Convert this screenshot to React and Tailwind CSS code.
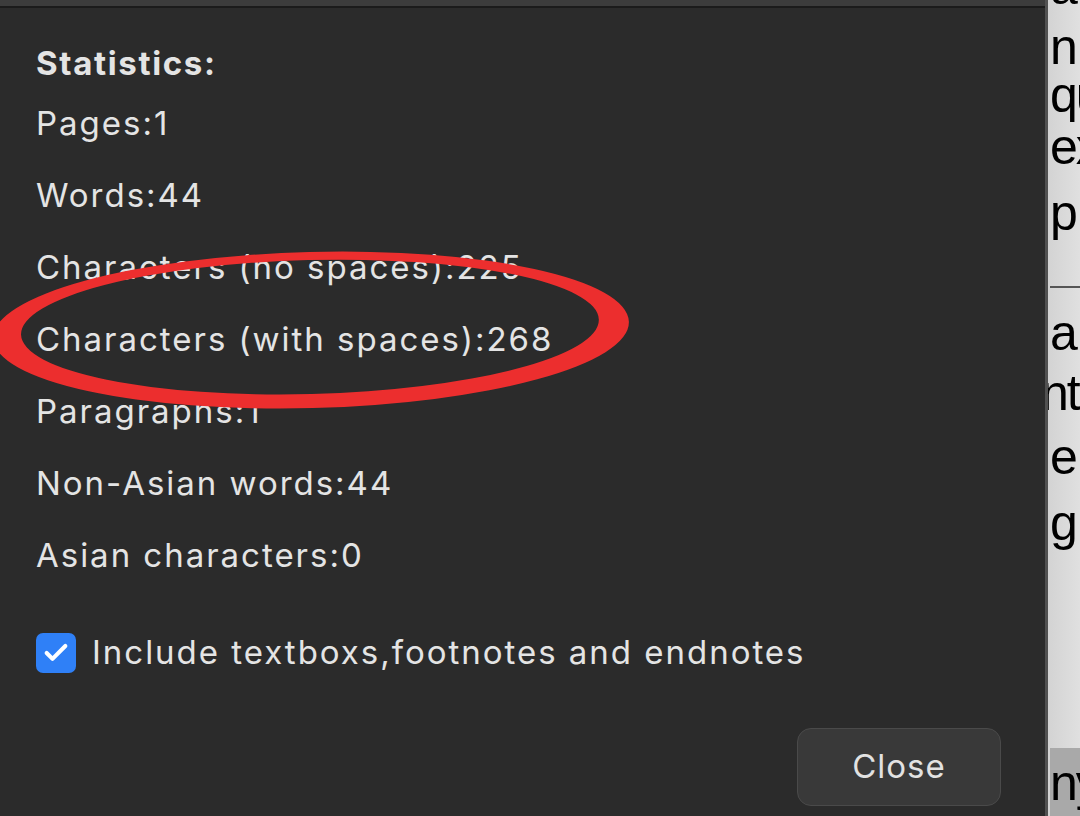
import { Check } from "lucide-react";

const stats = [
  "Pages:1",
  "Words:44",
  "Characters (no spaces):225",
  "Characters (with spaces):268",
  "Paragraphs:1",
  "Non-Asian words:44",
  "Asian characters:0",
];

// bits of the document peeking out to the right of the dialog
const docTop = [
  { text: "a", cls: "h-[60px]" },
  { text: "n", cls: "h-[48px]" },
  { text: "qu", cls: "h-[52px]" },
  { text: "ex", cls: "h-[66px]" },
  { text: "p", cls: "h-[60px]" },
];

const docMid = [
  { text: "a", cls: "h-[60px]" },
  { text: "nts", cls: "h-[64px] -ml-[9px]" },
  { text: "e", cls: "h-[66px]" },
  { text: "g", cls: "h-[60px]" },
];

function Ellipse() {
  const ring = (cx, cy, rx, ry) =>
    `M${cx - rx},${cy} a${rx},${ry} 0 1,0 ${2 * rx},0 a${rx},${ry} 0 1,0 ${-2 * rx},0 Z`;
  return (
    <svg
      className="absolute inset-0 pointer-events-none"
      width="1080"
      height="816"
      viewBox="0 0 1080 816"
    >
      <path
        d={ring(311, 330, 318, 78) + " " + ring(310, 327, 289, 67)}
        fill="#ec2e2e"
        fillRule="evenodd"
        transform="rotate(-1.5 312 330)"
      />
    </svg>
  );
}

export default function App() {
  return (
    <div
      className="relative w-[1080px] h-[816px] overflow-hidden flex bg-[#2b2b2b]"
      style={{ fontFamily: "Inter, 'Liberation Sans', Arial, sans-serif" }}
    >
      {/* dialog */}
      <div className="w-[1045px] h-full flex flex-col bg-[#2b2b2b]">
        <div className="h-[6px] bg-[#3c3c3c]" />
        <div className="h-[2px] bg-[#1b1b1b]" />

        <div className="flex-1 flex flex-col pl-[36px] pt-[35px] text-[#e4e4e4] text-[33px] tracking-[0.06em]">
          <div className="h-[40px] leading-[40px] font-bold tracking-[0.05em]">Statistics:</div>
          <div className="flex flex-col mt-[5px]">
            {stats.map((s) => (
              <div key={s} className="h-[72px] flex items-center">
                {s}
              </div>
            ))}
          </div>

          <div className="mt-[25px] h-[72px] flex items-center gap-[16px]">
            <div className="w-[40px] h-[40px] rounded-[7px] bg-[#2f80f7] flex items-center justify-center">
              <Check size={28} strokeWidth={3.5} color="#ffffff" />
            </div>
            <span>Include textboxs,footnotes and endnotes</span>
          </div>

          <div className="flex justify-end pr-[44px] mt-[39px]">
            <button className="w-[204px] h-[78px] rounded-[14px] bg-[#393939] border border-[#4a4a4a] text-[#e2e2e2] text-[33px] tracking-[0.03em]">
              Close
            </button>
          </div>
        </div>
      </div>

      {/* edge */}
      <div className="w-[3px] h-full bg-[#515151]" />

      {/* document behind */}
      <div
        className="flex-1 h-full flex flex-col overflow-hidden bg-gradient-to-r from-[#d3d3d3] to-[#e0e0e0] text-black text-[50px] leading-[60px] tracking-[-0.04em] pl-[2px]"
        style={{ fontFamily: "'Liberation Sans', Arial, sans-serif" }}
      >
        <div className="h-[286px] flex flex-col">
          <div className="-mt-[43px] flex flex-col">
            {docTop.map((l, i) => (
              <div key={i} className={`${l.cls} whitespace-nowrap`}>
                {l.text}
              </div>
            ))}
          </div>
        </div>
        <div className="h-[2px] bg-[#555555]" />
        <div className="h-[460px] flex flex-col pt-[15px]">
          {docMid.map((l, i) => (
            <div key={i} className={`${l.cls} whitespace-nowrap`}>
              {l.text}
            </div>
          ))}
        </div>
        <div className="flex-1 bg-[#a9a9a9] whitespace-nowrap pt-[5px]">ny</div>
      </div>

      <Ellipse />
    </div>
  );
}
